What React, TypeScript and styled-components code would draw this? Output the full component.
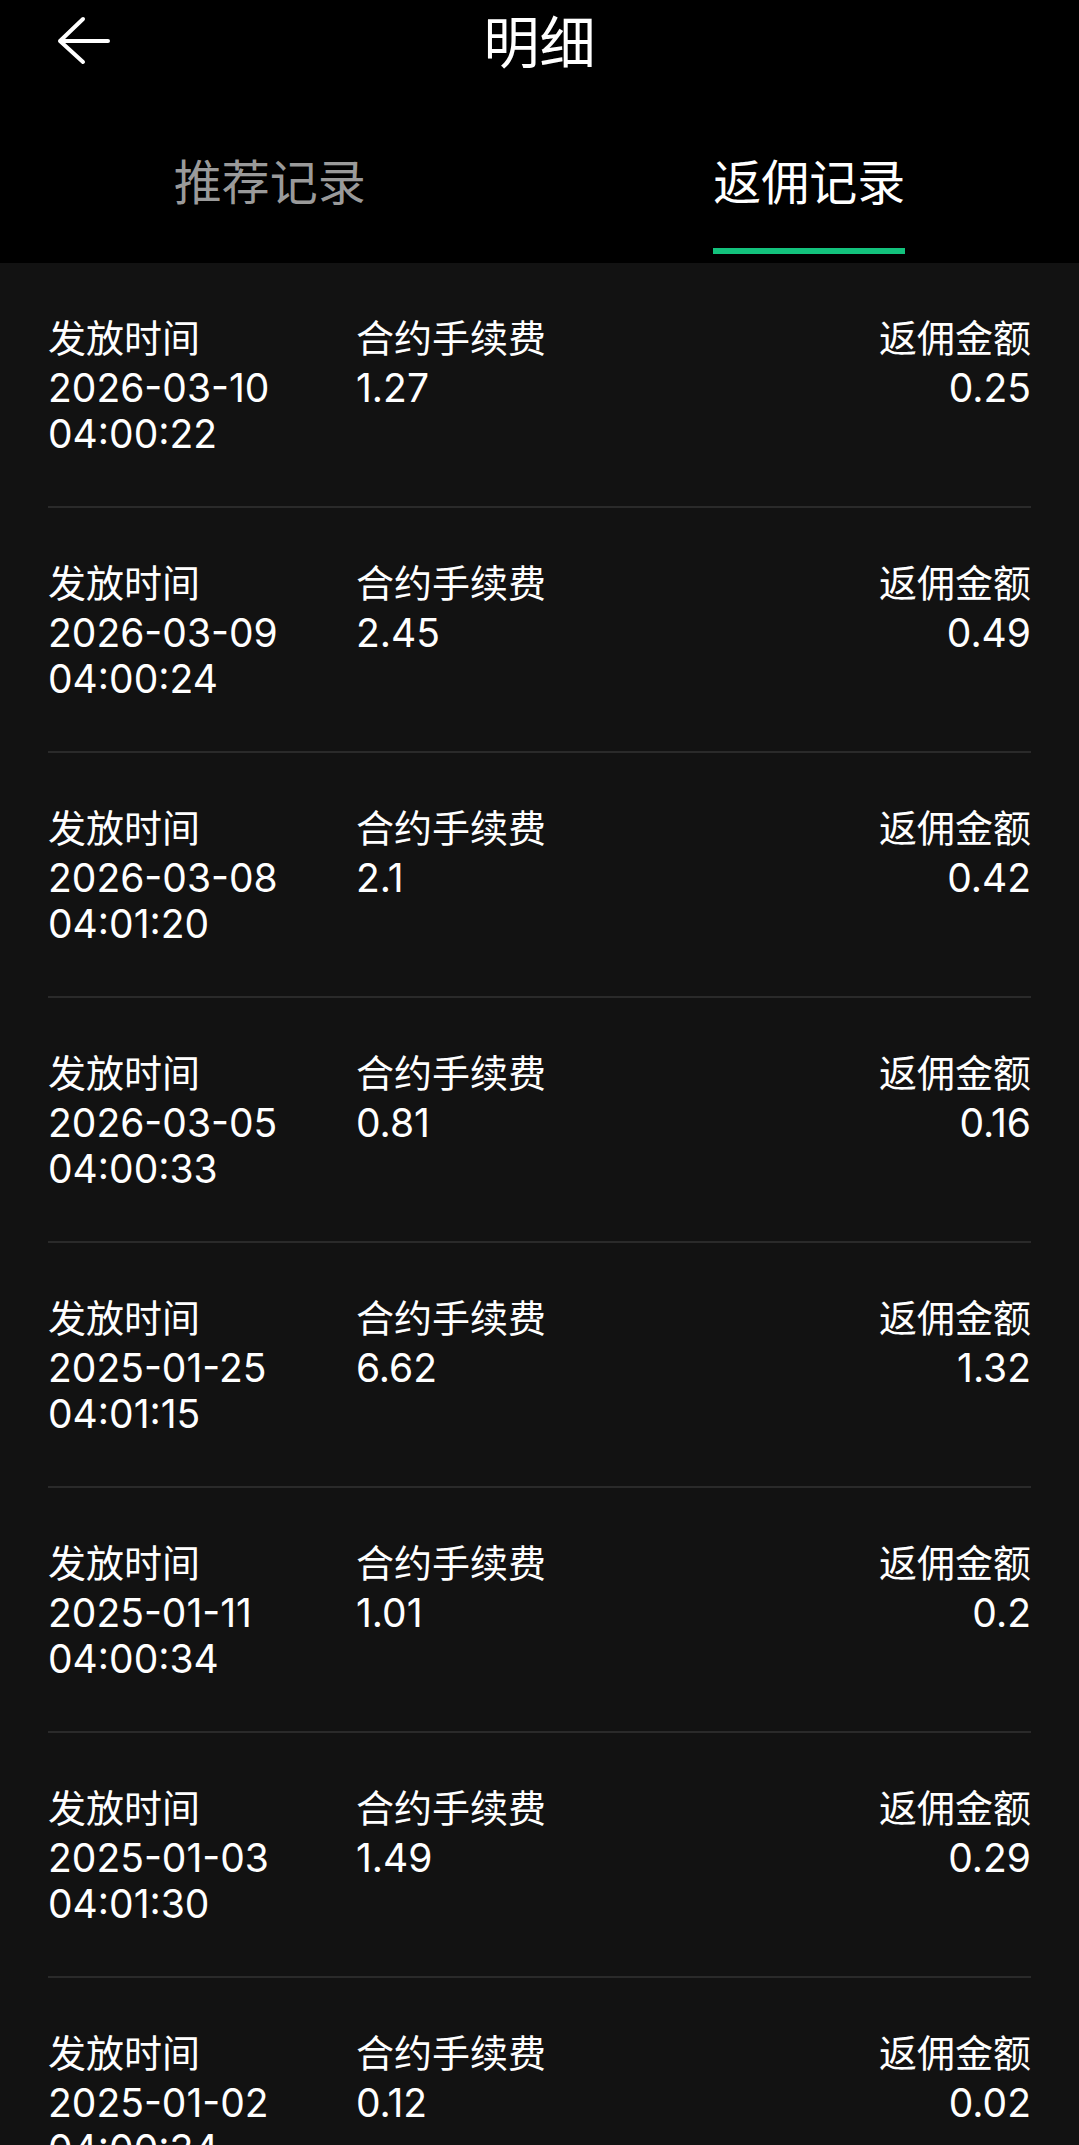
import React from "react";
import styled, { createGlobalStyle } from "styled-components";

const GlobalStyle = createGlobalStyle`
  html, body {
    margin: 0;
    padding: 0;
    background: #121212;
  }
  body {
    font-family: Inter, "Noto Sans CJK SC", sans-serif;
    color: #ffffff;
  }
  * { box-sizing: border-box; }
`;

const Page = styled.div`
  width: 1079px;
  min-height: 2145px;
  background: #121212;
`;

const Header = styled.header`
  background: #000000;
`;

const TopBar = styled.div`
  height: 90px;
  display: grid;
  grid-template-columns: 1fr auto 1fr;
  align-items: center;
`;

const BackButton = styled.button`
  justify-self: start;
  align-self: start;
  margin: 15px 0 0 56px;
  padding: 0;
  border: 0;
  background: transparent;
  width: 56px;
  height: 52px;
  display: flex;
  cursor: pointer;
`;

const Title = styled.h1`
  margin: 0 0 12px;
  font-family: "Noto Sans CJK SC", sans-serif;
  font-weight: 400;
  font-size: 56px;
  line-height: 56px;
  color: #ffffff;
`;

const TabBar = styled.nav`
  height: 173px;
  display: flex;
`;

const Tab = styled.div`
  flex: 1;
  display: flex;
  flex-direction: column;
  align-items: center;
  padding-top: 65px;
`;

const TabLabel = styled.span<{ $active?: boolean }>`
  font-family: "Noto Sans CJK SC", sans-serif;
  font-size: 48px;
  line-height: 48px;
  color: ${(p) => (p.$active ? "#ffffff" : "#9a9a9a")};
  display: flex;
  flex-direction: column;
  align-items: stretch;
  gap: 45px;
  &::after {
    content: "";
    display: block;
    height: 6px;
    background: ${(p) => (p.$active ? "#13c27d" : "transparent")};
  }
`;

const List = styled.div`
  display: flex;
  flex-direction: column;
`;

const Row = styled.div`
  margin: 0 48px;
  padding: 49px 0 49px;
  border-bottom: 2px solid #2a2a2a;
  display: grid;
  grid-template-columns: 308px 1fr auto;
`;

const Cell = styled.div<{ $right?: boolean }>`
  display: flex;
  flex-direction: column;
  align-items: ${(p) => (p.$right ? "flex-end" : "flex-start")};
`;

const Label = styled.span`
  font-family: "Noto Sans CJK SC", sans-serif;
  font-size: 38px;
  line-height: 47px;
  margin-bottom: 6px;
  color: #ffffff;
`;

const Value = styled.span`
  font-family: Inter, sans-serif;
  font-size: 39px;
  line-height: 46px;
  color: #ffffff;
`;

const BackArrow = () => (
  <svg width="56" height="52" viewBox="0 0 56 52" fill="none">
    <path
      d="M52 26H4M27 4L4 26L27 47"
      stroke="#ffffff"
      strokeWidth="4"
      strokeLinecap="round"
      strokeLinejoin="round"
    />
  </svg>
);

const records = [
  { date: "2026-03-10", time: "04:00:22", fee: "1.27", rebate: "0.25" },
  { date: "2026-03-09", time: "04:00:24", fee: "2.45", rebate: "0.49" },
  { date: "2026-03-08", time: "04:01:20", fee: "2.1", rebate: "0.42" },
  { date: "2026-03-05", time: "04:00:33", fee: "0.81", rebate: "0.16" },
  { date: "2025-01-25", time: "04:01:15", fee: "6.62", rebate: "1.32" },
  { date: "2025-01-11", time: "04:00:34", fee: "1.01", rebate: "0.2" },
  { date: "2025-01-03", time: "04:01:30", fee: "1.49", rebate: "0.29" },
  { date: "2025-01-02", time: "04:00:34", fee: "0.12", rebate: "0.02" },
];

export default function App() {
  return (
    <Page>
      <GlobalStyle />
      <Header>
        <TopBar>
          <BackButton aria-label="返回">
            <BackArrow />
          </BackButton>
          <Title>明细</Title>
          <div />
        </TopBar>
        <TabBar>
          <Tab>
            <TabLabel>推荐记录</TabLabel>
          </Tab>
          <Tab>
            <TabLabel $active>返佣记录</TabLabel>
          </Tab>
        </TabBar>
      </Header>
      <List>
        {records.map((r, i) => (
          <Row key={i}>
            <Cell>
              <Label>发放时间</Label>
              <Value>{r.date}</Value>
              <Value>{r.time}</Value>
            </Cell>
            <Cell>
              <Label>合约手续费</Label>
              <Value>{r.fee}</Value>
            </Cell>
            <Cell $right>
              <Label>返佣金额</Label>
              <Value>{r.rebate}</Value>
            </Cell>
          </Row>
        ))}
      </List>
    </Page>
  );
}
